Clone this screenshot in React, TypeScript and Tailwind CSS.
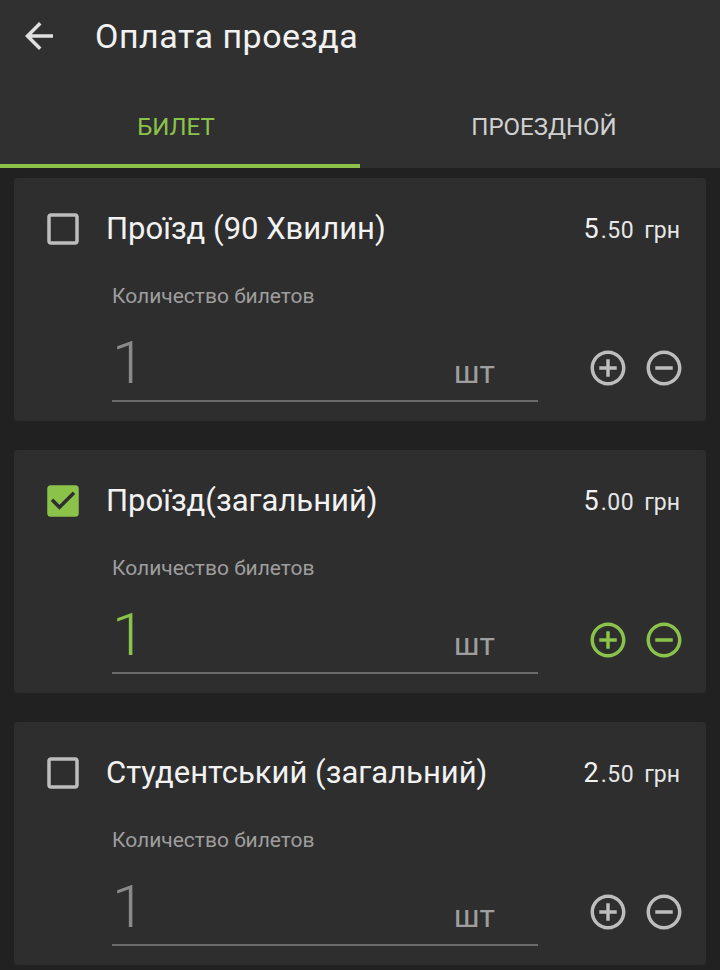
import * as React from "react"
import { MdArrowBack, MdCheckBox, MdCheckBoxOutlineBlank, MdAddCircleOutline, MdRemoveCircleOutline } from "react-icons/md"

interface Ticket { title: string; whole: string; cents: string; checked: boolean }

const tickets: Ticket[] = [
  { title: "Проїзд (90 Хвилин)", whole: "5", cents: ".50", checked: false },
  { title: "Проїзд(загальний)", whole: "5", cents: ".00", checked: true },
  { title: "Студентський (загальний)", whole: "2", cents: ".50", checked: false },
]

function TicketCard({ t }: { t: Ticket }) {
  const accent = t.checked ? "text-[#8bc34a]" : "text-[#bdbdbd]"
  return (
    <div className="bg-[#2e2e2e] rounded-[4px] pt-[30px] pb-[19px] pl-[28px] pr-[24px]">
      <div className="h-[42px] flex items-center">
        {t.checked
          ? <MdCheckBox size={42} className="text-[#8bc34a] shrink-0" />
          : <MdCheckBoxOutlineBlank size={42} className="text-[#bdbdbd] shrink-0" />}
        <span className="ml-[22px] text-[31px] text-[#f2f2f2]">{t.title}</span>
        <span className="ml-auto mr-[2px] flex items-baseline text-[#f2f2f2]">
          <span className="text-[27px]">{t.whole}</span>
          <span className="ml-[2px] text-[23px] text-[#e6e6e6] tracking-[0.5px]">{t.cents}</span>
          <span className="ml-[10px] text-[23px] text-[#e6e6e6]">грн</span>
        </span>
      </div>

      <div className="ml-[70px]">
        <p className="mt-[34px] h-[24px] leading-[24px] text-[21px] text-[#9e9e9e]">Количество билетов</p>
        <div className="flex items-center mt-[25px]">
          <div className="w-[426px] flex items-baseline pb-[7px] border-b-2 border-[#6b6b6b]">
            <span className={`flex-1 text-[60px] leading-none font-light ${t.checked ? "text-[#8bc34a]" : "text-[#8a8a8a]"}`}>1</span>
            <span className="mr-[43px] text-[32px] leading-none text-[#9e9e9e]">шт</span>
          </div>
          <div className={`ml-auto -mr-[3px] flex items-center gap-[14px] ${accent}`}>
            <MdAddCircleOutline size={42} />
            <MdRemoveCircleOutline size={42} />
          </div>
        </div>
      </div>
    </div>
  )
}

export default function App() {
  return (
    <div className="w-[720px] h-[970px] bg-[#212121] overflow-hidden" style={{ fontFamily: "Roboto, 'Noto Sans', sans-serif" }}>

      {/* Header */}
      <header className="bg-[#303030]">
        <div className="h-[72px] flex items-center">
          <MdArrowBack size={42} className="ml-[18px] text-[#e0e0e0]" />
          <span className="ml-[35px] text-[34px] tracking-[0.5px] text-[#f2f2f2]">Оплата проезда</span>
        </div>
        <div className="flex h-[96px]">
          <div className="flex-1 flex items-center justify-center pt-[18px] pr-[8px] border-b-4 border-[#8bc34a] text-[24px] text-[#8bc34a]">БИЛЕТ</div>
          <div className="flex-1 flex items-center justify-center pt-[18px] pl-[8px] border-b-4 border-transparent text-[24px] text-[#d0d0d0]">ПРОЕЗДНОЙ</div>
        </div>
      </header>

      {/* Tickets */}
      <div className="pt-[10px] px-[14px] flex flex-col gap-[29px]">
        {tickets.map((t) => <TicketCard key={t.title} t={t} />)}
      </div>
    </div>
  )
}
